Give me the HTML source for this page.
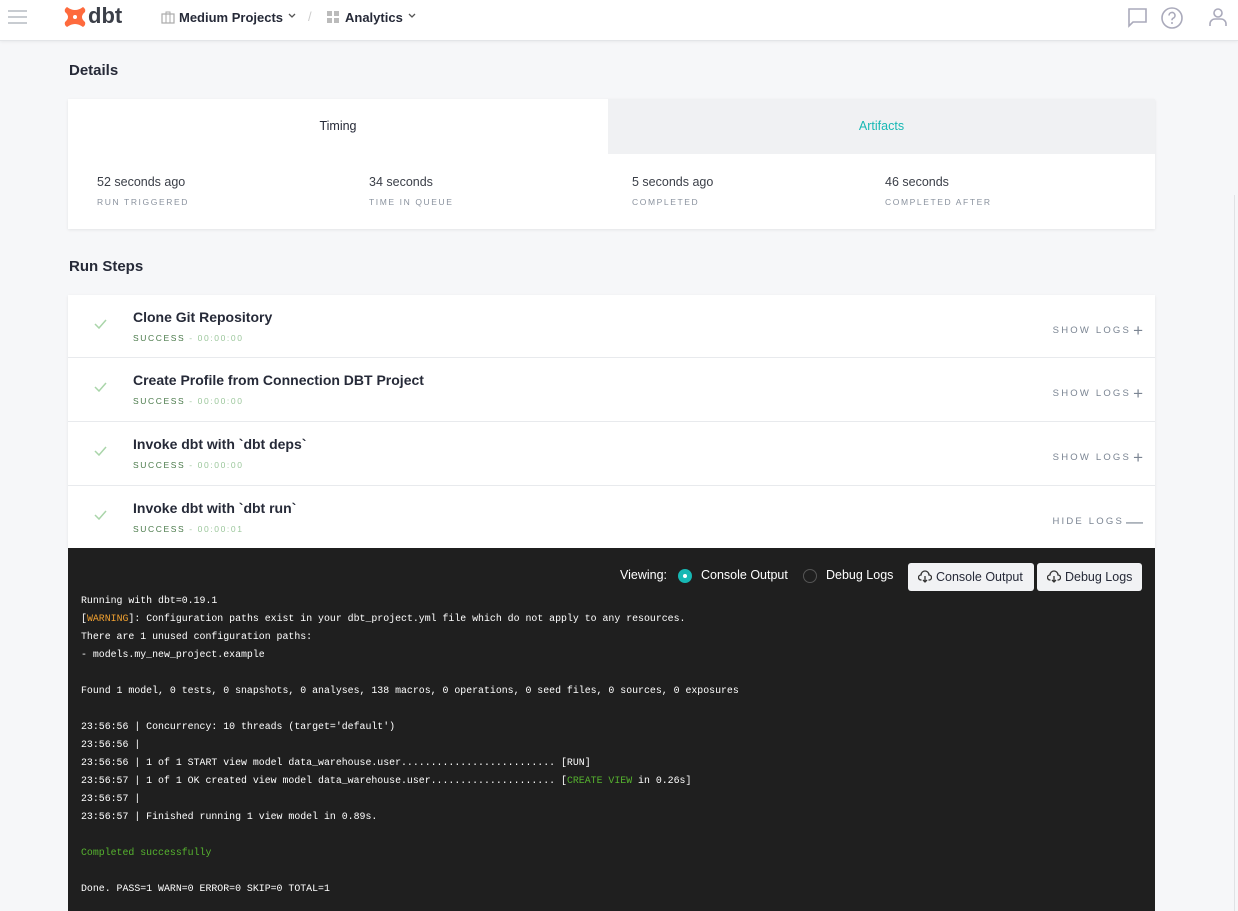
<!DOCTYPE html>
<html><head><meta charset="utf-8"><style>
*{box-sizing:border-box;margin:0;padding:0}
body{width:1238px;height:911px;overflow:hidden;background:#f6f7f9;font-family:"Liberation Sans",sans-serif;color:#262a38;position:relative}
.top{position:absolute;left:0;top:0;width:1238px;height:41px;background:#fff;border-bottom:1px solid #e3e5e8;box-shadow:0 1px 3px rgba(0,0,0,.06)}
.abs{position:absolute}
h2{position:absolute;left:69px;font-size:15px;font-weight:bold;color:#262a38}
.card{position:absolute;left:68px;width:1087px;background:#fff;box-shadow:0 1px 3px rgba(0,0,0,.08)}
.lbl{font-size:8.5px;letter-spacing:1.6px;color:#8a929e;text-transform:uppercase}
.val{font-size:12.5px;color:#3b3f48}
.step{position:absolute;left:0;width:1087px;height:63px;border-bottom:1px solid #e8eaed}
.step .t{position:absolute;left:65px;top:14px;font-size:14px;font-weight:bold;color:#262a38}
.step .s{position:absolute;left:65px;top:38px;font-size:8.5px;letter-spacing:1.6px;color:#4a7a4a}
.step .s span{color:#9cc79c}
.step .ck{position:absolute;left:26px;top:24px;width:13px;height:10px}
.step .r{position:absolute;right:12px;top:26px;font-size:9.5px;letter-spacing:2.2px;color:#7b8593}
.step .r b{font-size:17px;font-weight:normal;color:#7b8593;vertical-align:-3px;margin-left:2px;letter-spacing:0}
.con{position:absolute;left:68px;top:548px;width:1087px;height:363px;background:#1f1f1f}
pre{position:absolute;left:13px;top:44px;font-family:"Liberation Mono",monospace;font-size:9.9px;line-height:18px;color:#fff}
.y{color:#f0a030}.g{color:#56b32f}
.btn{position:absolute;top:15px;height:28px;background:#f1f2f4;border-radius:3px;font-size:12.5px;color:#262a38;line-height:28px;padding-left:28px}
.chev{position:absolute;top:13px}
</style></head><body>
<div class="top">
 <div class="abs" style="left:8px;top:10px;width:19px;height:2px;background:#c8ccd1;box-shadow:0 6px 0 #c8ccd1,0 12px 0 #c8ccd1"></div>
 <svg class="abs" style="left:64px;top:6px" width="22" height="22" viewBox="0 0 22 22"><path d="M3 1 Q11 7 19 1 Q22 3 21 6 Q15 11 21 16 Q22 19 19 21 Q11 15 3 21 Q0 19 1 16 Q7 11 1 6 Q0 3 3 1Z" fill="#fe6a3d"/><circle cx="11" cy="11" r="2" fill="#fff"/></svg>
 <div class="abs" style="left:88px;top:3px;font-size:22px;font-weight:bold;color:#3b3f48">dbt</div>
 <svg class="abs" style="left:161px;top:11px" width="14" height="13" viewBox="0 0 14 13"><rect x="1" y="3" width="12" height="9" fill="none" stroke="#aaa" stroke-width="1.2"/><path d="M5 3V1h4v2M5 3v9M9 3v9" stroke="#aaa" fill="none"/></svg>
 <div class="abs" style="left:179px;top:10px;font-size:13px;font-weight:bold;color:#262a38">Medium Projects</div>
 <svg class="chev" style="left:288px" width="8" height="6"><path d="M1 1l3 3 3-3" fill="none" stroke="#555" stroke-width="1.3"/></svg>
 <div class="abs" style="left:308px;top:9px;font-size:13px;color:#ccc">/</div>
 <svg class="abs" style="left:327px;top:11px" width="13" height="13"><g fill="#bbb"><rect x="0" y="0" width="5" height="5"/><rect x="7" y="0" width="5" height="5"/><rect x="0" y="7" width="5" height="5"/><rect x="7" y="7" width="5" height="5"/></g></svg>
 <div class="abs" style="left:345px;top:10px;font-size:13px;font-weight:bold;color:#262a38">Analytics</div>
 <svg class="chev" style="left:408px" width="8" height="6"><path d="M1 1l3 3 3-3" fill="none" stroke="#555" stroke-width="1.3"/></svg>
 <svg class="abs" style="left:1127px;top:7px" width="22" height="22" viewBox="0 0 22 22"><path d="M2 2h17v13H6l-4 4z" fill="none" stroke="#aab" stroke-width="1.6"/></svg>
 <svg class="abs" style="left:1160px;top:6px" width="24" height="24" viewBox="0 0 24 24"><circle cx="12" cy="12" r="10" fill="none" stroke="#aab" stroke-width="1.6"/><path d="M9 9.5a3 3 0 1 1 4 2.8c-.8.4-1 1-1 2" fill="none" stroke="#aab" stroke-width="1.6"/><circle cx="12" cy="17" r="1" fill="#aab"/></svg>
 <svg class="abs" style="left:1207px;top:6px" width="22" height="22" viewBox="0 0 22 22"><circle cx="11" cy="7" r="4" fill="none" stroke="#aab" stroke-width="1.6"/><path d="M3 20v-2a5 5 0 0 1 5-5h6a5 5 0 0 1 5 5v2" fill="none" stroke="#aab" stroke-width="1.6"/></svg>
</div>
<div class="abs" style="left:1234px;top:195px;width:1px;height:716px;background:#e0e2e5"></div>
<h2 style="top:62px">Details</h2>
<div class="card" style="top:99px;height:130px">
 <div class="abs" style="left:0;top:0;width:540px;height:55px;text-align:center;line-height:55px;font-size:12.5px;color:#262a38">Timing</div>
 <div class="abs" style="left:540px;top:0;width:547px;height:55px;background:#f0f1f3;text-align:center;line-height:55px;font-size:12.5px;color:#17b8b4">Artifacts</div>
 <div class="abs val" style="left:29px;top:76px">52 seconds ago</div><div class="abs lbl" style="left:29px;top:98px">Run Triggered</div>
 <div class="abs val" style="left:301px;top:76px">34 seconds</div><div class="abs lbl" style="left:301px;top:98px">Time in Queue</div>
 <div class="abs val" style="left:564px;top:76px">5 seconds ago</div><div class="abs lbl" style="left:564px;top:98px">Completed</div>
 <div class="abs val" style="left:817px;top:76px">46 seconds</div><div class="abs lbl" style="left:817px;top:98px">Completed After</div>
</div>
<h2 style="top:258px">Run Steps</h2>
<div class="card" style="top:295px;height:253px">
 <div class="step" style="top:0"><svg class="ck" viewBox="0 0 13 10"><path d="M1 5l4 4 7-8" fill="none" stroke="#a9d5a9" stroke-width="1.5"/></svg><div class="t">Clone Git Repository</div><div class="s">SUCCESS <span>- 00:00:00</span></div><div class="r">SHOW LOGS<b>+</b></div></div>
 <div class="step" style="top:63px;height:64px"><svg class="ck" viewBox="0 0 13 10"><path d="M1 5l4 4 7-8" fill="none" stroke="#a9d5a9" stroke-width="1.5"/></svg><div class="t">Create Profile from Connection DBT Project</div><div class="s">SUCCESS <span>- 00:00:00</span></div><div class="r">SHOW LOGS<b>+</b></div></div>
 <div class="step" style="top:127px;height:64px"><svg class="ck" viewBox="0 0 13 10"><path d="M1 5l4 4 7-8" fill="none" stroke="#a9d5a9" stroke-width="1.5"/></svg><div class="t">Invoke dbt with `dbt deps`</div><div class="s">SUCCESS <span>- 00:00:00</span></div><div class="r">SHOW LOGS<b>+</b></div></div>
 <div class="step" style="top:191px;height:62px;border:0"><svg class="ck" viewBox="0 0 13 10"><path d="M1 5l4 4 7-8" fill="none" stroke="#a9d5a9" stroke-width="1.5"/></svg><div class="t">Invoke dbt with `dbt run`</div><div class="s">SUCCESS <span>- 00:00:01</span></div><div class="r">HIDE LOGS<b>&#8212;</b></div></div>
</div>
<div class="con">
 <div class="abs" style="left:552px;top:20px;font-size:12.5px;color:#fff">Viewing:</div>
 <div class="abs" style="left:610px;top:21px;width:14px;height:14px;border-radius:50%;background:#17b8b4"><div style="margin:5px;width:4px;height:4px;border-radius:50%;background:#fff"></div></div>
 <div class="abs" style="left:633px;top:20px;font-size:12.5px;color:#fff">Console Output</div>
 <div class="abs" style="left:735px;top:21px;width:14px;height:14px;border-radius:50%;border:1px solid #555"></div>
 <div class="abs" style="left:758px;top:20px;font-size:12.5px;color:#fff">Debug Logs</div>
 <div class="btn" style="left:840px;width:126px">Console Output</div>
 <div class="btn" style="left:969px;width:105px">Debug Logs</div>
 <svg class="abs" style="left:850px;top:22px" width="14" height="13" viewBox="0 0 14 13"><path d="M3.5 10H3a2.5 2.5 0 0 1 0-5 4 4 0 0 1 8 0 2.5 2.5 0 0 1 0 5h-.5M7 6v6M5 10l2 2 2-2" fill="none" stroke="#333" stroke-width="1.3"/></svg>
 <svg class="abs" style="left:979px;top:22px" width="14" height="13" viewBox="0 0 14 13"><path d="M3.5 10H3a2.5 2.5 0 0 1 0-5 4 4 0 0 1 8 0 2.5 2.5 0 0 1 0 5h-.5M7 6v6M5 10l2 2 2-2" fill="none" stroke="#333" stroke-width="1.3"/></svg>
<pre>Running with dbt=0.19.1
[<span class="y">WARNING</span>]: Configuration paths exist in your dbt_project.yml file which do not apply to any resources.
There are 1 unused configuration paths:
- models.my_new_project.example

Found 1 model, 0 tests, 0 snapshots, 0 analyses, 138 macros, 0 operations, 0 seed files, 0 sources, 0 exposures

23:56:56 | Concurrency: 10 threads (target='default')
23:56:56 |
23:56:56 | 1 of 1 START view model data_warehouse.user.......................... [RUN]
23:56:57 | 1 of 1 OK created view model data_warehouse.user..................... [<span class="g">CREATE VIEW</span> in 0.26s]
23:56:57 |
23:56:57 | Finished running 1 view model in 0.89s.

<span class="g">Completed successfully</span>

Done. PASS=1 WARN=0 ERROR=0 SKIP=0 TOTAL=1</pre>
</div>
</body></html>
